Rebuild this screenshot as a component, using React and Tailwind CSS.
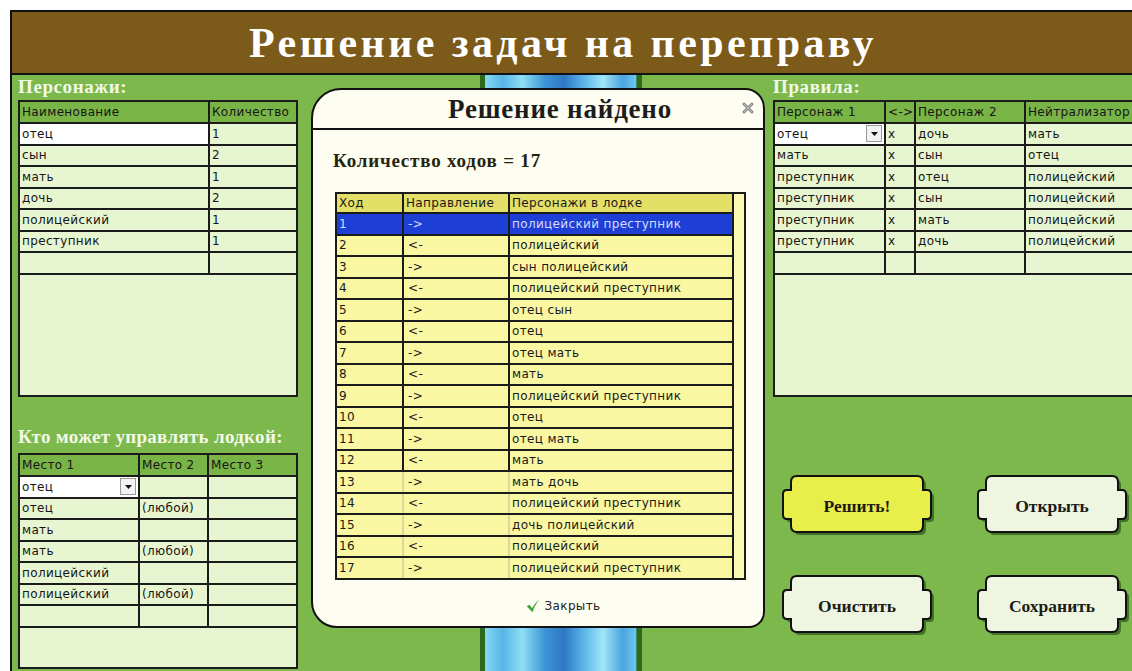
import React from "react";

const cellFont = "font-['DejaVu_Sans',sans-serif] text-[12px] leading-none tracking-[0.35px]";
const serif = "font-['Liberation_Serif',serif] font-bold";
const line = "border-[#1b1b1b]";

const characters = [
  ["отец", "1"],
  ["сын", "2"],
  ["мать", "1"],
  ["дочь", "2"],
  ["полицейский", "1"],
  ["преступник", "1"],
];

const pilots = [
  ["мать", ""],
  ["мать", "(любой)"],
  ["полицейский", ""],
  ["полицейский", "(любой)"],
];

const rules = [
  ["мать", "x", "сын", "отец"],
  ["преступник", "x", "отец", "полицейский"],
  ["преступник", "x", "сын", "полицейский"],
  ["преступник", "x", "мать", "полицейский"],
  ["преступник", "x", "дочь", "полицейский"],
];

const moves = [
  ["->", "полицейский преступник"],
  ["<-", "полицейский"],
  ["->", "сын полицейский"],
  ["<-", "полицейский преступник"],
  ["->", "отец сын"],
  ["<-", "отец"],
  ["->", "отец мать"],
  ["<-", "мать"],
  ["->", "полицейский преступник"],
  ["<-", "отец"],
  ["->", "отец мать"],
  ["<-", "мать"],
  ["->", "мать дочь"],
  ["<-", "полицейский преступник"],
  ["->", "дочь полицейский"],
  ["<-", "полицейский"],
  ["->", "полицейский преступник"],
];

function Caret() {
  return (
    <svg width="7" height="4" viewBox="0 0 7 4">
      <path d="M0 0H7L3.5 4Z" fill="#111" />
    </svg>
  );
}

// white editable cell with a combo button on the right
function Combo({ value }) {
  return (
    <div className="flex h-full w-full items-center justify-between bg-white pl-[2px] pr-[2px]">
      <span>{value}</span>
      <span className="flex h-[17px] w-[16px] items-center justify-center border border-[#9a9a9a] bg-[#f2f2f2]">
        <Caret />
      </span>
    </div>
  );
}

function Cell({ width, last, children }) {
  return (
    <div
      className={`flex h-full items-center overflow-hidden whitespace-nowrap ${width} ${
        last ? "flex-1 px-[2px]" : `border-r-2 ${line} px-[2px]`
      }`}
    >
      {children}
    </div>
  );
}

function Sheet({ cols, head, rows, className }) {
  return (
    <div className={`flex flex-col overflow-hidden border-2 ${line} bg-[#e7f5d1] text-[#151515] ${cellFont} ${className}`}>
      <div className={`flex h-[22px] shrink-0 border-b-2 ${line} bg-[#79b446]`}>
        {head.map((h, i) => (
          <Cell key={i} width={cols[i]} last={i === head.length - 1}>
            {h}
          </Cell>
        ))}
      </div>
      {rows.map((r, ri) => (
        <div key={ri} className={`flex h-[21.5px] shrink-0 border-b-2 ${line}`}>
          {r.map((c, i) => (
            <Cell key={i} width={cols[i]} last={i === r.length - 1}>
              {c}
            </Cell>
          ))}
        </div>
      ))}
    </div>
  );
}

function MovesTable() {
  return (
    <div className={`ml-[22px] flex w-[411px] border-x-2 border-t-2 ${line} ${cellFont}`}>
      <div className="flex w-[395px] flex-col">
        <div className={`flex h-[20px] border-b-2 ${line} bg-[#e4df66] text-[#1a1a1a]`}>
          <div className={`flex w-[67px] items-center border-r-2 ${line} px-[2px]`}>Ход</div>
          <div className={`flex w-[106px] items-center border-r-2 ${line} px-[2px]`}>Направление</div>
          <div className="flex flex-1 items-center px-[2px]">Персонажи в лодке</div>
        </div>
        {moves.map(([dir, who], i) => {
          const active = i === 0;
          const sep = i < 12 ? line : "border-[#dcd89a]";
          return (
            <div
              key={i}
              className={`flex h-[21.5px] border-b-2 ${line} ${
                active ? "bg-[#1d3fd6] text-[#d6dcff]" : "bg-[#f9f7a2] text-[#1a1a1a]"
              }`}
            >
              <div className={`flex w-[67px] items-center border-r-2 ${sep} px-[2px]`}>{i + 1}</div>
              <div className={`flex w-[106px] items-center border-r-2 ${sep} px-[4px]`}>{dir}</div>
              <div className="flex flex-1 items-center px-[2px]">{who}</div>
            </div>
          );
        })}
      </div>
      <div className={`flex-1 border-b-2 border-l-2 ${line} bg-[#fbf9b4]`} />
    </div>
  );
}

function Plate({ label, fill }) {
  const d =
    "M15 1H135Q141 1 141 7V15H145Q149 15 149 19V40Q149 44 145 44H141V51Q141 57 135 57H15Q9 57 9 51V44H5Q1 44 1 40V19Q1 15 5 15H9V7Q9 1 15 1Z";
  return (
    <button type="button" className="relative h-[62px] w-[154px]">
      <svg className="absolute left-0 top-0" width="154" height="62" viewBox="0 0 154 62">
        <path d={d} transform="translate(3 3)" fill="#2f5a1c" opacity="0.75" />
        <path d={d} fill={fill} stroke="#111" strokeWidth="2" />
      </svg>
      <span className={`relative flex h-[58px] w-[150px] items-center justify-center ${serif} text-[17.5px] text-[#1c1c14]`}>
        {label}
      </span>
    </button>
  );
}

function Solution() {
  return (
    <div className="absolute left-[13px] top-[13px] flex h-[540px] w-[454px] flex-col rounded-bl-[26px] rounded-br-[16px] rounded-tl-[30px] rounded-tr-[20px] border-2 border-[#111] bg-[#fdfdf1]">
      <div className="relative flex h-[40px] shrink-0 items-center justify-center border-b-2 border-[#111] pl-[44px]">
        <span className={`${serif} text-[27px] tracking-[0.8px] text-[#1c1c1c]`}>Решение найдено</span>
        <svg className="absolute right-[9px] top-[12px]" width="12" height="12" viewBox="0 0 12 12">
          <path d="M2 2L10 10M10 2L2 10" stroke="#8a8a8a" strokeWidth="3" strokeLinecap="round" />
          <path d="M2 2L10 10M10 2L2 10" stroke="#c4c4c4" strokeWidth="1" strokeLinecap="round" />
        </svg>
      </div>
      <div className="flex h-[62px] shrink-0 items-center pl-[20px]">
        <span className={`${serif} text-[19px] tracking-[0.8px] text-[#25250f]`}>Количество ходов = 17</span>
      </div>
      <MovesTable />
      <div className="flex flex-1 items-center justify-center pl-[50px] pt-[6px]">
        <svg width="14" height="14" viewBox="0 0 14 14" className="mr-[5px]">
          <path d="M1 7.5L3.5 6.3L5.8 9.4Q8.8 3.8 13.6 0.6Q9.4 5 6.4 13.2Z" fill="#3aa536" />
          <path d="M1 7.5L3.5 6.3L5.8 9.4" stroke="#1f7a1c" strokeWidth="0.6" fill="none" />
        </svg>
        <span className={`${cellFont} text-[#222]`}>Закрыть</span>
      </div>
    </div>
  );
}

export default function App() {
  return (
    <div className="h-[671px] w-[1132px] overflow-hidden bg-white pl-[10px] pt-[10px]">
      <div className="flex h-[700px] w-[1140px] flex-col border-l-2 border-t-2 border-[#111]">
        <header className="flex h-[63px] shrink-0 items-center justify-center border-b-2 border-[#111] bg-[#7b5a1a] pr-[36px]">
          <h1 className={`${serif} text-[42px] leading-none tracking-[3.4px] text-white`}>Решение задач на переправу</h1>
        </header>

        <div className="flex flex-1 bg-[#7cb84c]">
          {/* characters and boat pilots */}
          <div className="flex w-[286px] shrink-0 flex-col pl-[6px]">
            <div className={`flex h-[25px] items-center ${serif} text-[19px] tracking-[0.6px] text-[#f2f9e6]`}>Персонажи:</div>
            <Sheet
              className="h-[297px] w-[280px]"
              cols={["w-[190px]", ""]}
              head={["Наименование", "Количество"]}
              rows={[
                ...characters.map(([n, q], i) => [
                  i === 0 ? <div className="-mx-[2px] flex h-full w-[188px] items-center bg-white px-[2px]">{n}</div> : n,
                  q,
                ]),
                ["", ""],
              ]}
            />
            <div className={`flex h-[56px] items-end whitespace-nowrap pb-[2px] ${serif} text-[19px] tracking-[0.3px] text-[#f2f9e6]`}>
              Кто может управлять лодкой:
            </div>
            <Sheet
              className="h-[216px] w-[280px]"
              cols={["w-[120px]", "w-[69px]", ""]}
              head={["Место 1", "Место 2", "Место 3"]}
              rows={[
                [<div className="-mx-[2px] h-full w-[118px]"><Combo value="отец" /></div>, "", ""],
                ["отец", "(любой)", ""],
                ...pilots.map(([a, b]) => [a, b, ""]),
                ["", "", ""],
              ]}
            />
          </div>

          {/* river with the result dialog over it */}
          <div className="relative w-[475px] shrink-0">
            <div className="ml-[182px] h-full w-[162px] bg-[linear-gradient(90deg,#2c6a1d_0,#2c6a1d_5px,#86daf3_5px,#56b4e6_14%,#8fdff5_26%,#3d94d6_40%,#2e78c4_52%,#5bb6ea_64%,#a2e6f7_76%,#4aa4de_88%,#6cc6ee_96%,#2c6a1d_calc(100%-5px),#2c6a1d_100%)]" />
            <Solution />
          </div>

          {/* rules and actions */}
          <div className="flex flex-1 flex-col">
            <div className={`flex h-[25px] items-center ${serif} text-[19px] tracking-[0.6px] text-[#f2f9e6]`}>Правила:</div>
            <Sheet
              className="h-[297px] w-[363px]"
              cols={["w-[111px]", "w-[30px]", "w-[110px]", ""]}
              head={["Персонаж 1", "<->", "Персонаж 2", "Нейтрализатор"]}
              rows={[
                [<div className="-mx-[2px] h-full w-[109px]"><Combo value="отец" /></div>, "x", "дочь", "мать"],
                ...rules,
                ["", "", "", ""],
              ]}
            />
            <div className="ml-[9px] mt-[78px] grid grid-cols-[154px_154px] gap-x-[41px] gap-y-[38px]">
              <Plate label="Решить!" fill="#e8ee4a" />
              <Plate label="Открыть" fill="#eef6e2" />
              <Plate label="Очистить" fill="#eef6e2" />
              <Plate label="Сохранить" fill="#eef6e2" />
            </div>
          </div>
        </div>
      </div>
    </div>
  );
}
